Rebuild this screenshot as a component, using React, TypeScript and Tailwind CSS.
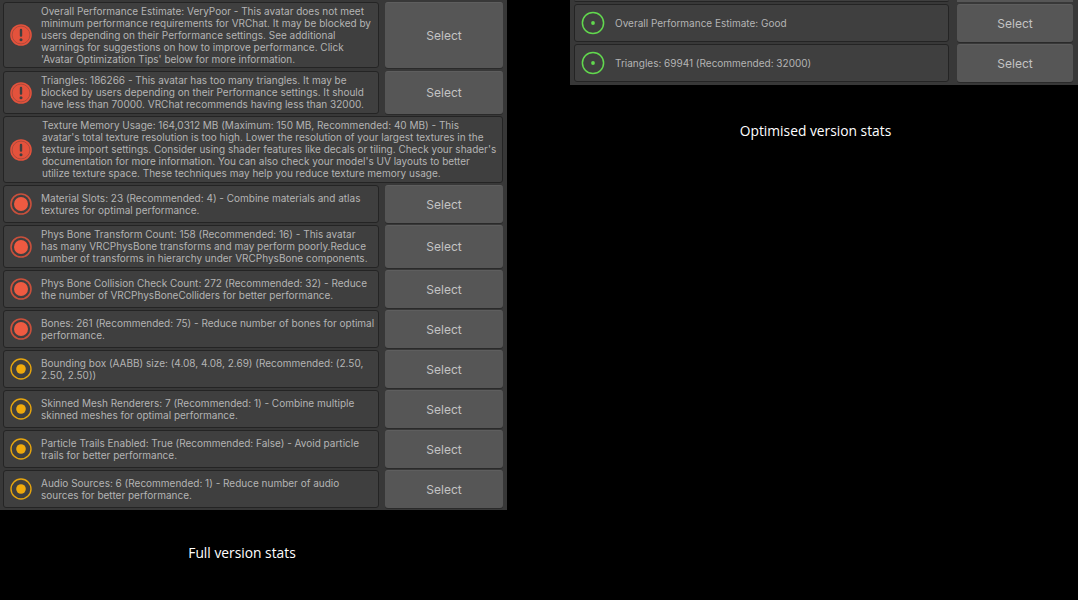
import React from "react";

type Kind = "warn" | "good";

const FONT = "font-['Inter','Noto_Sans',sans-serif]";

function StatusIcon({ kind }: { kind: Kind }) {
  if (kind === "good") {
    return (
      <svg width="24" height="24" viewBox="0 0 24 24" className="shrink-0">
        <circle cx="12" cy="12" r="10.6" fill="none" stroke="#62d84e" strokeWidth="1.5" />
        <circle cx="12" cy="12" r="1.9" fill="#62d84e" />
      </svg>
    );
  }
  return (
    <svg width="24" height="24" viewBox="0 0 24 24" className="shrink-0">
      <circle cx="12" cy="12" r="10" fill="none" stroke="#e5a50f" strokeWidth="1.4" />
      <circle cx="12" cy="12" r="4.8" fill="#f0aa0c" />
    </svg>
  );
}

function RedIcon({ bang }: { bang: boolean }) {
  return (
    <svg width="24" height="24" viewBox="0 0 24 24" className="shrink-0">
      {bang ? (
        <>
          <circle cx="12" cy="12" r="10.8" fill="#e4523c" />
          <circle cx="12" cy="12" r="8.9" fill="none" stroke="#a8483a" strokeWidth="0.9" />
          <rect x="10.8" y="5.8" width="2.4" height="8" rx="1.1" fill="#3f3f3f" />
          <circle cx="12" cy="16.8" r="1.5" fill="#3f3f3f" />
        </>
      ) : (
        <>
          <circle cx="12" cy="12" r="10" fill="none" stroke="#c9503c" strokeWidth="1.6" />
          <circle cx="12" cy="12" r="7" fill="#ef5a41" />
        </>
      )}
    </svg>
  );
}

function Box({ children, className }: { children: React.ReactNode; className: string }) {
  return (
    <div className={`flex items-center rounded-[3px] border border-[#242424] bg-[#3f3f3f] ${className}`}>
      {children}
    </div>
  );
}

function SelectButton({ className }: { className: string }) {
  return (
    <div
      className={`flex items-center justify-center rounded-[3px] border-t border-[#5e5e5e] bg-[#565656] text-[12px] text-[#c4c4c4] shadow-[0_1px_0_#2a2a2a] ${className}`}
    >
      Select
    </div>
  );
}

type Row = { icon: "bang" | "dot" | "warn"; lines: string[]; h: string; mt: string };

const rows: Row[] = [
  {
    icon: "bang",
    h: "h-[66px]",
    mt: "mt-0",
    lines: [
      "Overall Performance Estimate: VeryPoor - This avatar does not meet",
      "minimum performance requirements for VRChat. It may be blocked by",
      "users depending on their Performance settings. See additional",
      "warnings for suggestions on how to improve performance. Click",
      "'Avatar Optimization Tips' below for more information.",
    ],
  },
  {
    icon: "bang",
    h: "h-[43px]",
    mt: "mt-[3px]",
    lines: [
      "Triangles: 186266 - This avatar has too many triangles. It may be",
      "blocked by users depending on their Performance settings. It should",
      "have less than 70000. VRChat recommends having less than 32000.",
    ],
  },
  {
    icon: "dot",
    h: "h-[38px]",
    mt: "mt-[71px]",
    lines: ["Material Slots: 23 (Recommended: 4) - Combine materials and atlas", "textures for optimal performance."],
  },
  {
    icon: "dot",
    h: "h-[43px]",
    mt: "mt-[2px]",
    lines: [
      "Phys Bone Transform Count: 158 (Recommended: 16) - This avatar",
      "has many VRCPhysBone transforms and may perform poorly.Reduce",
      "number of transforms in hierarchy under VRCPhysBone components.",
    ],
  },
  {
    icon: "dot",
    h: "h-[38px]",
    mt: "mt-[2px]",
    lines: ["Phys Bone Collision Check Count: 272 (Recommended: 32) - Reduce", "the number of VRCPhysBoneColliders for better performance."],
  },
  {
    icon: "dot",
    h: "h-[38px]",
    mt: "mt-[2px]",
    lines: ["Bones: 261 (Recommended: 75) - Reduce number of bones for optimal", "performance."],
  },
  {
    icon: "warn",
    h: "h-[38px]",
    mt: "mt-[2px]",
    lines: ["Bounding box (AABB) size: (4.08, 4.08, 2.69) (Recommended: (2.50,", "2.50, 2.50))"],
  },
  {
    icon: "warn",
    h: "h-[38px]",
    mt: "mt-[2px]",
    lines: ["Skinned Mesh Renderers: 7 (Recommended: 1) - Combine multiple", "skinned meshes for optimal performance."],
  },
  {
    icon: "warn",
    h: "h-[38px]",
    mt: "mt-[2px]",
    lines: ["Particle Trails Enabled: True (Recommended: False) - Avoid particle", "trails for better performance."],
  },
  {
    icon: "warn",
    h: "h-[38px]",
    mt: "mt-[2px]",
    lines: ["Audio Sources: 6 (Recommended: 1) - Reduce number of audio", "sources for better performance."],
  },
];

const textureLines = [
  "Texture Memory Usage: 164,0312 MB (Maximum: 150 MB, Recommended: 40 MB) - This",
  "avatar's total texture resolution is too high. Lower the resolution of your largest textures in the",
  "texture import settings. Consider using shader features like decals or tiling. Check your shader's",
  "documentation for more information. You can also check your model's UV layouts to better",
  "utilize texture space. These techniques may help you reduce texture memory usage.",
];

function Lines({ lines, className = "" }: { lines: string[]; className?: string }) {
  return (
    <div className={`whitespace-nowrap text-[10px] leading-[12px] text-[#b4b4b4] ${className}`}>
      {lines.map((l) => (
        <div key={l}>{l}</div>
      ))}
    </div>
  );
}

function LeftRow({ row }: { row: Row }) {
  return (
    <div className={`flex gap-[6px] ${row.h} ${row.mt}`}>
      <Box className="w-[376px] pl-[4.5px]">
        {row.icon === "warn" ? <StatusIcon kind="warn" /> : <RedIcon bang={row.icon === "bang"} />}
        <div className="ml-[8.5px]">
          <Lines lines={row.lines} className={row.lines.length === 3 ? "-mt-[1px]" : ""} />
        </div>
      </Box>
      <SelectButton className="w-[118px]" />
    </div>
  );
}

function GoodRow({ text }: { text: string }) {
  return (
    <div className="mt-[2px] flex h-[38px] gap-[8px]">
      <Box className="w-[375px] pl-[6px]">
        <StatusIcon kind="good" />
        <span className="ml-[10px] mt-[1px] text-[10px] text-[#b4b4b4]">{text}</span>
      </Box>
      <SelectButton className="flex-1" />
    </div>
  );
}

export default function App() {
  return (
    <div className={`flex h-[600px] w-[1078px] overflow-hidden bg-black ${FONT}`}>
      <div className="w-[507px] shrink-0">
        <div className="relative h-[510px] bg-[#383838] pl-[3px] pt-[2px]">
          {rows.map((r) => (
            <LeftRow key={r.lines[0]} row={r} />
          ))}
          <Box className="absolute left-[3px] top-[116px] h-[67px] w-[500px] pl-[5px]">
            <RedIcon bang />
            <div className="ml-[9px]">
              <Lines lines={textureLines} className="-mt-[1px]" />
            </div>
          </Box>
        </div>
        <div className="mt-[34px] pr-[23px] text-center font-['Open_Sans',sans-serif] text-[13.8px] leading-[18px] text-white">
          Full version stats
        </div>
      </div>
      <div className="ml-[63px] w-[508px] shrink-0">
        <div className="h-[85px] bg-[#383838] pl-[4px] pr-[5px]">
          <div className="flex h-[2px] gap-[8px]">
            <div className="w-[375px] rounded-b-[3px] border-b border-[#242424] bg-[#3f3f3f]" />
            <div className="flex-1 bg-[#565656]" />
          </div>
          <GoodRow text="Overall Performance Estimate: Good" />
          <GoodRow text="Triangles: 69941 (Recommended: 32000)" />
        </div>
        <div className="mt-[37px] pr-[17px] text-center font-['Open_Sans',sans-serif] text-[13.8px] leading-[18px] text-white">
          Optimised version stats
        </div>
      </div>
    </div>
  );
}
